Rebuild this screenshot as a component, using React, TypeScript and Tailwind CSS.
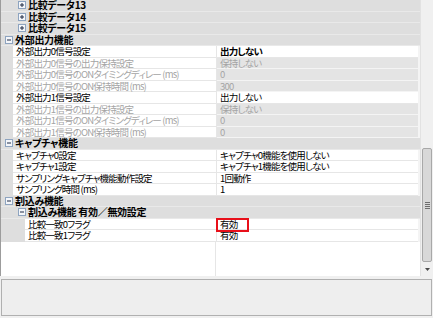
import { FC } from "react";

type Kind = "sub" | "cat" | "prop";

interface RowData {
  kind: Kind;
  name: string;
  value?: string;
  open?: boolean;
  disabled?: boolean;
  bold?: boolean;
  depth?: number;
}

const rows: RowData[] = [
  { kind: "sub", name: "比較データ13", open: false },
  { kind: "sub", name: "比較データ14", open: false },
  { kind: "sub", name: "比較データ15", open: false },
  { kind: "cat", name: "外部出力機能", open: true },
  { kind: "prop", name: "外部出力0信号設定", value: "出力しない", bold: true },
  { kind: "prop", name: "外部出力0信号の出力保持設定", value: "保持しない", disabled: true },
  { kind: "prop", name: "外部出力0信号のONタイミングディレー (ms)", value: "0", disabled: true },
  { kind: "prop", name: "外部出力0信号のON保持時間 (ms)", value: "300", disabled: true },
  { kind: "prop", name: "外部出力1信号設定", value: "出力しない" },
  { kind: "prop", name: "外部出力1信号の出力保持設定", value: "保持しない", disabled: true },
  { kind: "prop", name: "外部出力1信号のONタイミングディレー (ms)", value: "0", disabled: true },
  { kind: "prop", name: "外部出力1信号のON保持時間 (ms)", value: "0", disabled: true },
  { kind: "cat", name: "キャプチャ機能", open: true },
  { kind: "prop", name: "キャプチャ0設定", value: "キャプチャ0機能を使用しない" },
  { kind: "prop", name: "キャプチャ1設定", value: "キャプチャ1機能を使用しない" },
  { kind: "prop", name: "サンプリングキャプチャ機能動作設定", value: "1回動作" },
  { kind: "prop", name: "サンプリング時間 (ms)", value: "1" },
  { kind: "cat", name: "割込み機能", open: true },
  { kind: "sub", name: "割込み機能 有効／無効設定", open: true },
  { kind: "prop", name: "比較一致0フラグ", value: "有効", depth: 2 },
  { kind: "prop", name: "比較一致1フラグ", value: "有効", depth: 2 },
];

// small +/- box of the tree
const Toggle: FC<{ open?: boolean }> = ({ open }) => (
  <svg width="8" height="8" viewBox="0 0 8 8" className="shrink-0">
    <rect x="0.5" y="0.5" width="7" height="7" fill="#f4f6fa" stroke="#8ea4c0" />
    <line x1="2" y1="4" x2="6" y2="4" stroke="#1e2a44" />
    {!open && <line x1="4" y1="2" x2="4" y2="6" stroke="#1e2a44" />}
  </svg>
);

const Row: FC<{ row: RowData }> = ({ row }) => {
  if (row.kind !== "prop") {
    const cat = row.kind === "cat";
    return (
      <div className="h-[11.5px] flex items-center bg-[#dedede] border-b border-[#e9e9e9]">
        <div className={cat ? "w-[14px] pl-[4px] flex items-center" : "w-[27px] pl-[17px] flex items-center"}>
          <Toggle open={row.open} />
        </div>
        <span className="font-bold text-black text-[10px] tracking-[-0.3px]">{row.name}</span>
      </div>
    );
  }
  const deep = row.depth === 2;
  return (
    <div className="h-[11.5px] flex">
      <div className={deep ? "w-[24px] bg-[#dedede]" : "w-[12px] bg-[#dedede]"} />
      <div
        className={`${deep ? "w-[192px]" : "w-[204px]"} bg-white border-b border-r border-[#e6e6e6] flex items-center pl-[3px] whitespace-nowrap ${
          row.disabled ? "text-[#a4a4a4]" : "text-black"
        }`}
      >
        {row.name}
      </div>
      <div
        className={`flex-1 flex items-center pl-[3px] border-b whitespace-nowrap ${
          row.disabled
            ? "bg-[#e4e4e4] border-[#f4f4f4] text-[#a4a4a4]"
            : "bg-white border-[#e6e6e6] text-black"
        } ${row.bold ? "font-bold" : ""}`}
      >
        {row.value}
      </div>
      <div className="w-[2px] bg-[#f4f4f4]" />
    </div>
  );
};

const Scrollbar: FC = () => (
  <div className="w-[13px] h-full bg-[#f0f0f0] border-l border-[#e2e2e2] flex flex-col">
    <div className="h-[148px]" />
    <div className="h-[114px] mx-[1px] bg-[#d8d8d8] border border-[#a8a8a8] rounded-[2px] flex items-center justify-center">
      <div className="flex flex-col gap-[1px]">
        <div className="w-[5px] h-px bg-[#6e6e6e]" />
        <div className="w-[5px] h-px bg-[#6e6e6e]" />
        <div className="w-[5px] h-px bg-[#6e6e6e]" />
        <div className="w-[5px] h-px bg-[#6e6e6e]" />
      </div>
    </div>
    <div className="flex-1 flex items-center justify-center">
      <svg width="5" height="3" viewBox="0 0 5 3">
        <path d="M0 0h5L2.5 3z" fill="#4a4a4a" />
      </svg>
    </div>
  </div>
);

const App: FC = () => {
  return (
    <div
      className="w-[433px] h-[318px] bg-[#f0f0f0] overflow-hidden flex flex-col text-[9.5px] leading-[10px] [font-feature-settings:'palt'] tracking-[-0.8px]"
      style={{ fontFamily: '"Noto Sans CJK JP", "Noto Sans", sans-serif' }}
    >
      <div className="h-[276px] flex border-l border-[#9c9c9c]">
        <div className="w-[419px] relative bg-white flex flex-col overflow-hidden">
          {rows.map((r, i) => (
            <Row key={i} row={r} />
          ))}
          <div className="flex-1 flex">
            <div className="w-[215px] border-r border-[#e6e6e6]" />
          </div>
          {/* annotation box */}
          <div className="absolute left-[215px] top-[218px] w-[33px] h-[14px] border-2 border-[#e8101a]" />
        </div>
        <Scrollbar />
      </div>
      <div className="mt-[3px] mx-[1px] h-[37px] border border-[#b0b0b0] bg-[#eeeeee]" />
    </div>
  );
};

export default App;
